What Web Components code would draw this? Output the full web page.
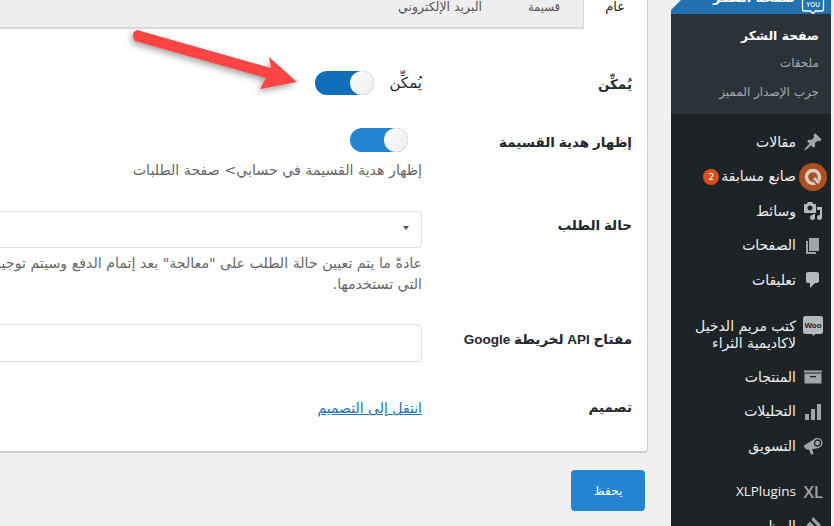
<!DOCTYPE html>
<html lang="ar" dir="rtl">
<head>
<meta charset="utf-8">
<style>
  html, body { margin: 0; height: 100%; }
  body { background: #f0f0f1; font: 14px/1.4 "DejaVu Sans", "Noto Sans", sans-serif; overflow: hidden; }
</style>
</head>
<body>
<wp-shell>
  <wp-sidebar slot="side"></wp-sidebar>
  <settings-panel></settings-panel>
</wp-shell>
<script>
class WpShell extends HTMLElement {
  connectedCallback() {
    this.attachShadow({ mode: 'open' });
    this.shadowRoot.innerHTML = `
      <style>
        :host { display: flex; width: 834px; height: 526px; overflow: hidden; position: relative; }
        .side { flex: 0 0 160px; margin-right: 3px; }
        .main { flex: 0 0 671px; min-width: 0; }
      </style>
      <div class="side"><slot name="side"></slot></div>
      <div class="main"><slot></slot></div>
    `;
  }
}

const GREY = '#a0a5aa';
const ICONS = {
  pin: `<path d="M10.440 3.020l1.820-1.820 6.360 6.350-1.830 1.820c-1.050-.68-2.480-.57-3.410.36l-.75.750c-.92.930-1.040 2.350-.35 3.410l-1.830 1.820-2.410-2.410-2.800 2.790c-.42.420-3.380 2.710-3.800 2.290s1.860-3.390 2.280-3.810l2.790-2.790L4.100 9.360l1.830-1.820c1.050.69 2.480.57 3.400-.36l.75-.750c.93-.92 1.050-2.350.36-3.410z" fill="${GREY}"/>`,
  quiz: `<circle cx="10" cy="10" r="14" fill="#ad4f20"/><circle cx="10" cy="10" r="6.500" fill="none" stroke="#d4cfcb" stroke-width="3.400"/><path d="M10 11l8 8" stroke="#ad4f20" stroke-width="5"/><path d="M11 11l5 5" stroke="#d4cfcb" stroke-width="3"/>`,
  media: `<path d="M13 11V4c0-.55-.45-1-1-1h-1.670L9 1H5L3.670 3H2c-.55 0-1 .45-1 1v7c0 .55.45 1 1 1h10c.55 0 1-.45 1-1zM7 4.500c1.380 0 2.500 1.120 2.500 2.500S8.380 9.500 7 9.500 4.500 8.380 4.500 7 5.620 4.500 7 4.500zM14 6h5v10.500c0 1.380-1.120 2.500-2.500 2.500S14 17.880 14 16.500s1.120-2.500 2.500-2.500c.17 0 .34.020.5.050V9h-3V6zm-4 8.050V13h2v3.500c0 1.380-1.120 2.500-2.500 2.500S7 17.880 7 16.500 8.120 14 9.500 14c.17 0 .34.020.5.050z" fill="#b4b9be" fill-rule="evenodd"/>`,
  pages: `<path d="M6 15V2h10v13H6zm-1 1h8v2H3V5h2v11z" fill="${GREY}"/>`,
  comment: `<path d="M5 2h9c1.100 0 2 .9 2 2v7c0 1.100-.9 2-2 2h-2l-5 5v-5H5c-1.100 0-2-.9-2-2V4c0-1.100.9-2 2-2z" fill="#b4b9be"/>`,
  woo: `<rect x="0" y="0" width="20" height="18" rx="2.500" fill="#b4b9be"/><path d="M9 18l1.500 2 1.500-2z" fill="#b4b9be"/><text x="10" y="12" font-size="8" font-weight="700" text-anchor="middle" fill="#1d2327" font-family="Liberation Sans, sans-serif">Woo</text>`,
  box: `<path d="M1 3.500h18v2H1z" fill="${GREY}"/><path d="M1.500 6.500h17v10h-17z" fill="${GREY}"/><path d="M7 9h6v1.300H7z" fill="#1d2327"/>`,
  bars: `<path d="M18 18V2h-4v16h4zm-6 0V7H8v11h4zm-6 0v-6H2v6h4z" fill="${GREY}"/>`,
  horn: `<path d="M1 9.500L13 2l3 10-9.500 1.500-1.500.2C3 13.700 .5 11 1 9.500z" fill="${GREY}"/><path d="M6 13h3.200l1.300 5-2.500.8z" fill="${GREY}"/><circle cx="14.500" cy="7" r="5" fill="${GREY}"/><circle cx="14.500" cy="7" r="3" fill="none" stroke="#1d2327" stroke-width="1.300"/>`,
  tool: `<path d="M10 1l8 8-3 1.500-6.500-6.500zM7 5.500L13.500 12 9 14.500 3.500 9zM3 10l5 5-3.500 4-5-5z" fill="${GREY}"/>`
};

class WpSidebar extends HTMLElement {
  connectedCallback() {
    this.attachShadow({ mode: 'open' });
    const item = (icon, label, cls = '') => `
      <li class="item ${cls}">
        <svg class="ic" viewBox="0 0 20 20" width="20" height="20">${ICONS[icon]}</svg>
        <span>${label}</span>
      </li>`;
    this.shadowRoot.innerHTML = `
      <style>
        :host { display: block; background: #1d2327; height: 100%; color: #f0f0f1; font-size: 14px; overflow: hidden; }
        ul { list-style: none; margin: 0; padding: 0; }
        .current { background: #2271b1; color: #fff; height: 14px; display: flex; align-items: flex-end; gap: 6px; padding: 0 6px 0 0; overflow: hidden; position: relative; }
        .current::after { content: ""; position: absolute; left: 0; top: 0; border: 5px solid transparent; border-left-color: #f0f0f1; border-top-color: #f0f0f1; }
        .current span { font-weight: 700; font-size: 13px; line-height: 16px; margin-bottom: 8px; }
        .bubble { flex: none; }
        .sub { background: #2c3338; height: 100px; padding-top: 7px; box-sizing: border-box; color: #a7aaad; font-size: 12px; }
        .sub li { padding: 0 12px 0 0; height: 28.500px; display: flex; align-items: center; }
        .sub li.on { color: #fff; font-weight: 700; font-size: 12.400px; }
        .list { padding-top: 11px; }
        .item { display: flex; align-items: center; gap: 7px; min-height: 34.500px; padding-right: 8px; line-height: 17px; }
        .ic { flex: none; overflow: visible; }
        .gap { margin-top: 11px; }
        .gap.tall { margin-top: 10px; padding: 10px 8px 8px 0; align-items: flex-start; }
        .tall .ic { margin-top: -2px; }
        .badge { display: inline-block; background: #d9501f; color: #fff; border-radius: 50%; width: 16px; height: 16px; font-size: 9px; line-height: 16px; text-align: center; margin-right: 2px; vertical-align: 1px; }
        .xl { font: 600 17px/20px "Open Sans", sans-serif; color: ${GREY}; width: 20px; flex: none; direction: ltr; text-align: center; letter-spacing: -.5px; }
        .lat { font-family: "Open Sans", sans-serif; font-size: 13.500px; }
      </style>
      <div class="current">
        <svg class="bubble" viewBox="0 0 24 14" width="24" height="14">
          <path d="M1.500 -4v13q0 2 2 2h6l2.500 2.500 2.500-2.500h6q2 0 2-2v-13" fill="none" stroke="#fff" stroke-width="1.300"/>
          <text x="12" y="7" font-size="6.500" font-weight="700" text-anchor="middle" fill="#dfe8f0" font-family="Liberation Sans, sans-serif">YOU</text>
        </svg>
        <span>صفحة الشكر</span>
      </div>
      <ul class="sub">
        <li class="on">صفحة الشكر</li>
        <li>ملحقات</li>
        <li>جرب الإصدار المميز</li>
      </ul>
      <ul class="list">
        ${item('pin', 'مقالات')}
        ${item('quiz', 'صانع مسابقة<span class="badge">2</span>')}
        ${item('media', 'وسائط')}
        ${item('pages', 'الصفحات')}
        ${item('comment', 'تعليقات')}
        ${item('woo', 'كتب مريم الدخيل<br>لاكاديمية الثراء', 'gap tall')}
        ${item('box', 'المنتجات')}
        ${item('bars', 'التحليلات')}
        ${item('horn', 'التسويق')}
        <li class="item gap"><span class="xl">XL</span><span class="lat">XLPlugins</span></li>
        ${item('tool', 'المظهر')}
      </ul>
    `;
  }
}

class ToggleSwitch extends HTMLElement {
  connectedCallback() {
    this.attachShadow({ mode: 'open' });
    const w = this.getAttribute('width') || 58;
    this.shadowRoot.innerHTML = `
      <style>
        :host { display: block; width: ${w}px; height: 24px; border-radius: 12px; background: var(--track, #2385d1); position: relative; flex: none; }
        i { position: absolute; right: 0; top: 0; width: 24px; height: 24px; border-radius: 50%; background: linear-gradient(135deg, #fff, #ececec); }
      </style>
      <i></i>
    `;
  }
}

class SettingRow extends HTMLElement {
  connectedCallback() {
    this.attachShadow({ mode: 'open' });
    this.shadowRoot.innerHTML = `
      <style>
        :host { display: grid; grid-template-columns: 210px 1fr; align-items: start; }
        .label { font-family: "Liberation Sans", "DejaVu Sans", sans-serif; font-size: 13.500px; font-weight: 700; color: #23282d; line-height: 20px; padding-top: var(--label-top, 0); }
      </style>
      <div class="label"><slot name="label"></slot></div>
      <div class="field"><slot></slot></div>
    `;
  }
}

class SettingsPanel extends HTMLElement {
  connectedCallback() {
    this.attachShadow({ mode: 'open' });
    this.shadowRoot.innerHTML = `
      <style>
        :host { display: block; width: 1100px; margin: 0 23px 0 0; font-size: 14px; color: #23282d; }
        .card { background: #fff; border: solid #ccd0d4; border-width: 0 1px 2px 2px; border-radius: 0 0 4px 4px; height: 453px; box-sizing: border-box; }
        .tabs { display: flex; height: 29px; background: #eee; border-bottom: 2px solid #d8d8d8; box-sizing: border-box; }
        .tab { padding: 0 23px; line-height: 14px; color: #555; font-size: 12.500px; white-space: nowrap; }
        .tab.coupon { font-size: 11.500px; }
        .tab.on { background: #fff; color: #23282d; width: 64px; box-sizing: border-box; margin-bottom: -2px; border-left: 1px solid #d8d8d8; padding: 0 22px 0 0; font-size: 13px; }
        .body { padding: 0 15px; }
        .r1 { display: flex; align-items: center; gap: 14px; height: 24px; }
        .r1 span { min-width: 34px; font-size: 15px; }
        .hint { color: #666; font-size: 14.200px; line-height: 21px; white-space: nowrap; }
        .box { display: block; width: 700px; height: 37px; border: 1px solid #ddd; border-radius: 4px; box-sizing: border-box; position: relative; background: #fff; }
        .box.sel::after { content: ""; position: absolute; right: 12px; top: 14px; border: solid transparent; border-width: 4px 3.500px 0; border-top-color: #555; }
        a { color: #2271b1; text-decoration: underline; font-size: 14px; line-height: 20px; }
        .save { display: block; width: 74px; height: 41px; margin: 17px 3px 0 0; background: #2385d1; border: 0; border-radius: 4px; color: #fff; font: 12px "DejaVu Sans", sans-serif; }
        .arrow { position: absolute; left: 130px; top: 20px; filter: drop-shadow(-2px 3px 3px rgba(0,0,0,.35)); }
      </style>
      <div class="card">
        <div class="tabs">
          <div class="tab on">عام</div>
          <div class="tab coupon">قسيمة</div>
          <div class="tab">البريد الإلكتروني</div>
        </div>
        <div class="body">
          <setting-row style="margin-top:42px;--label-top:4px">
            <span slot="label">يُمكِّن</span>
            <div class="r1"><span>يُمكِّن</span><toggle-switch width="59" style="--track:#0f6fbb"></toggle-switch></div>
          </setting-row>
          <setting-row style="margin-top:33px;--label-top:5px">
            <span slot="label">إظهار هدية القسيمة</span>
            <toggle-switch style="margin-right:14px"></toggle-switch>
            <div class="hint" style="margin-top:8px">إظهار هدية القسيمة في حسابي&gt; صفحة الطلبات</div>
          </setting-row>
          <setting-row style="margin-top:30px;--label-top:5px">
            <span slot="label">حالة الطلب</span>
            <div class="box sel"></div>
            <div class="hint" style="margin-top:5px">عادةً ما يتم تعيين حالة الطلب على "معالجة" بعد إتمام الدفع وسيتم توجيه العميل إلى صفحة الشكر<br>التي تستخدمها.</div>
          </setting-row>
          <setting-row style="margin-top:29px;--label-top:6px">
            <span slot="label">مفتاح API لخريطة Google</span>
            <div class="box" style="height:38px"></div>
          </setting-row>
          <setting-row style="margin-top:36px">
            <span slot="label">تصميم</span>
            <a href="#">انتقل إلى التصميم</a>
          </setting-row>
        </div>
      </div>
      <button class="save">يحفظ</button>
      <svg class="arrow" width="180" height="80" viewBox="130 20 180 80">
        <path d="M137 30 L271 68 L269 57 L297 82 L260 89 L266 78 L135 41 Q130 33 137 30Z" fill="#ff4444"/>
      </svg>
    `;
  }
}

customElements.define('wp-shell', WpShell);
customElements.define('wp-sidebar', WpSidebar);
customElements.define('toggle-switch', ToggleSwitch);
customElements.define('setting-row', SettingRow);
customElements.define('settings-panel', SettingsPanel);
</script>
</body>
</html>
